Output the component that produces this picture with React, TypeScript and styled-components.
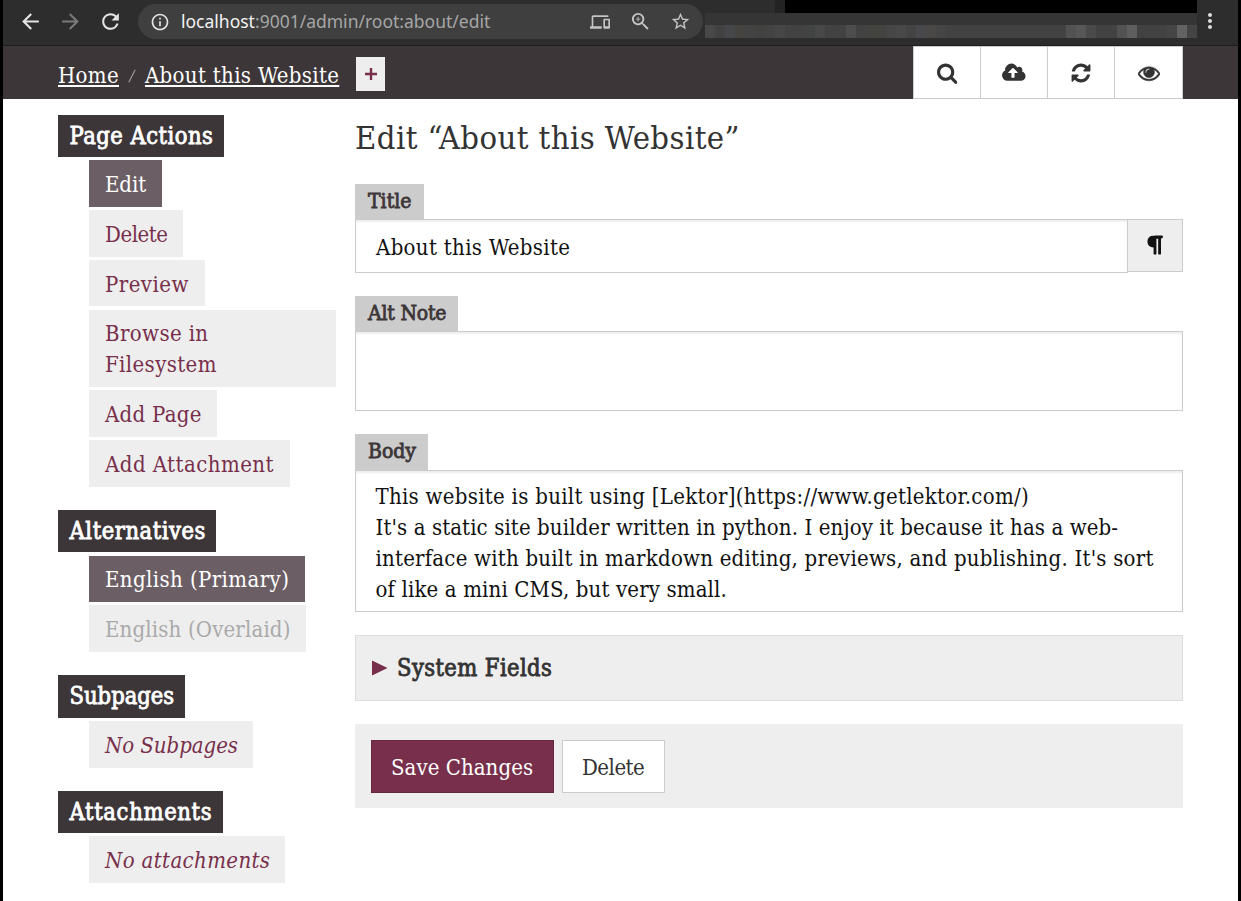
import React from "react";
import styled, { createGlobalStyle } from "styled-components";
import {
  MdArrowBack,
  MdArrowForward,
  MdRefresh,
  MdInfoOutline,
  MdDevices,
  MdZoomIn,
  MdStarOutline,
  MdMoreVert,
} from "react-icons/md";

const slab = `"DejaVu Serif Condensed", "DejaVu Serif", serif`;

const GlobalStyle = createGlobalStyle`
  *, *::before, *::after { box-sizing: border-box; }
  body {
    margin: 0;
    background: #000;
    color: #333;
    font-family: ${slab};
    font-size: 22px;
  }
`;

const Window = styled.div`
  width: 1241px;
  height: 901px;
  padding: 0 3px;
  background: #000;
  overflow: hidden;
`;

const Viewport = styled.div`
  height: 100%;
  background: #fff;
`;

/* ---------- browser toolbar ---------- */

const BrowserBar = styled.div`
  display: flex;
  align-items: flex-start;
  height: 46px;
  background: #2d2d2d;
  border-bottom: 1px solid #1d1d1d;
`;

const NavButtons = styled.div`
  display: flex;
  gap: 15px;
  width: 135px;
  padding: 9px 0 0 15px;
`;

const NavIcon = styled.span<{ $dim?: boolean }>`
  display: flex;
  font-size: 25px;
  color: ${(p) => (p.$dim ? "#7a7a7a" : "#e4e4e4")};
`;

const AddressBar = styled.div`
  display: flex;
  align-items: center;
  width: 565px;
  height: 35px;
  margin-top: 4px;
  padding: 0 12px;
  border-radius: 18px;
  background: #3f3f3f;
  color: #c4c4c4;
`;

const InfoIcon = styled(MdInfoOutline)`
  font-size: 20px;
  color: #e4e4e4;
`;

const Url = styled.span`
  flex: 1;
  margin-left: 11px;
  font: 17.5px/35px "Noto Sans", sans-serif;
  color: #a6a6a6;
`;

const Host = styled.span`
  color: #f2f2f2;
`;

const AddressIcons = styled.div`
  display: grid;
  grid-template-columns: repeat(3, 40px);
  justify-items: center;
  align-items: center;
  margin-right: -9px;
`;

const Redaction = styled.div`
  width: 492px;
  height: 38px;
  margin-left: 2px;
`;

const RedactionTop = styled.div`
  height: 13px;
  background: linear-gradient(90deg, transparent 70px, #232323 70px 80px, #000 80px);
`;

const RedactionMiddle = styled.div`
  height: 12px;
  background: #353535;
`;

const Mosaic = styled.div`
  display: flex;
  height: 13px;
`;

const MosaicCell = styled.span<{ $w: number; $c: string }>`
  flex: none;
  width: ${(p) => p.$w}px;
  background: ${(p) => p.$c};
`;

const MenuIcon = styled(MdMoreVert)`
  margin: 9px 0 0 1px;
  font-size: 24px;
  color: #dcdcdc;
`;

/* ---------- page header ---------- */

const Header = styled.header`
  display: flex;
  justify-content: space-between;
  height: 53px;
  padding: 0 55px;
  background: #3d3638;
`;

const Breadcrumbs = styled.nav`
  display: flex;
  align-items: center;
  padding-top: 6px;
`;

const Crumb = styled.a`
  color: #fff;
  letter-spacing: 0.33px;
  text-decoration: underline 2px;
  text-underline-offset: 2px;
  text-decoration-skip-ink: none;
`;

const Separator = styled.span`
  display: flex;
  width: 26px;
  justify-content: center;
  color: #999;
`;

const AddCrumb = styled.a`
  display: flex;
  align-items: center;
  justify-content: center;
  width: 29px;
  height: 34px;
  margin: 0 0 3px 17px;
  background: #eee;
`;

const HeaderButtons = styled.div`
  display: flex;
`;

const HeaderButton = styled.button`
  display: flex;
  align-items: center;
  justify-content: center;
  width: 68px;
  height: 53px;
  padding: 0;
  border: 1px solid #ccc;
  background: #fff;
  & + & {
    margin-left: -1px;
  }
  &:last-child {
    width: 69px;
  }
`;

/* ---------- layout ---------- */

const Content = styled.div`
  display: grid;
  grid-template-columns: 278px 828px;
  column-gap: 19px;
  padding: 0 55px;
`;

const Sidebar = styled.aside`
  display: flex;
  flex-direction: column;
  gap: 23.46px;
  padding-top: 15.58px;
`;

const Section = styled.section`
  display: flex;
  flex-direction: column;
  align-items: flex-start;
`;

const SectionTitle = styled.h4<{ $w: number; $track?: number }>`
  width: ${(p) => p.$w}px;
  height: 42.2px;
  margin: 0;
  padding-left: 11.5px;
  background: #3d3638;
  color: #fff;
  font-size: 23.5px;
  font-weight: 400;
  line-height: 43px;
  letter-spacing: ${(p) => p.$track ?? 0.48}px;
  white-space: nowrap;
  -webkit-text-stroke: 0.8px #fff;
`;

const ItemList = styled.ul`
  display: flex;
  flex-direction: column;
  align-items: flex-start;
  gap: 3.3px;
  margin: 3.3px 0 0 31px;
  padding: 0;
  list-style: none;
`;

type Tone = "link" | "active" | "muted" | "empty";

const Item = styled.li<{ $w: number; $track: number; $tone: Tone }>`
  width: ${(p) => p.$w}px;
  padding: 9.8px 0 6.2px 16px;
  background: ${(p) => (p.$tone === "active" ? "#6c5e65" : "#eee")};
  color: ${(p) => (p.$tone === "active" ? "#fff" : p.$tone === "muted" ? "#aaa" : "#782f4b")};
  font-style: ${(p) => (p.$tone === "empty" ? "italic" : "normal")};
  line-height: 30.6px;
  letter-spacing: ${(p) => p.$track}px;
  white-space: pre-line;
`;

/* ---------- form ---------- */

const Main = styled.main`
  display: flex;
  flex-direction: column;
`;

const PageTitle = styled.h2`
  height: 85px;
  margin: 0;
  padding-top: 19px;
  font-size: 32.5px;
  font-weight: 400;
  line-height: 40px;
  letter-spacing: 0.42px;
`;

const Field = styled.div`
  display: flex;
  flex-direction: column;
  align-items: flex-start;
  margin-bottom: 23px;
`;

const Label = styled.label<{ $w: number; $h?: number; $track?: number }>`
  width: ${(p) => p.$w}px;
  height: ${(p) => p.$h ?? 35}px;
  padding-left: 13px;
  background: #ccc;
  color: #3d3638;
  font-size: 21px;
  line-height: 35px;
  letter-spacing: ${(p) => p.$track ?? 0}px;
  -webkit-text-stroke: 0.8px #3d3638;
`;

const InputGroup = styled.div`
  display: flex;
  align-items: flex-start;
  width: 100%;
`;

const TextInput = styled.div`
  width: 773px;
  height: 54px;
  padding: 2px 20px 0;
  border: 1px solid #ccc;
  box-shadow: inset 0 2px 2px rgba(0, 0, 0, 0.07);
  color: #111;
  line-height: 52px;
  letter-spacing: 0.33px;
`;

const InputAddon = styled.div`
  display: flex;
  align-items: center;
  justify-content: center;
  width: 56px;
  height: 53px;
  margin-left: -1px;
  padding-bottom: 2px;
  border: 1px solid #ccc;
  background: #eee;
`;

const TextArea = styled.div<{ $h: number }>`
  width: 100%;
  height: ${(p) => p.$h}px;
  padding: 9.5px 19.5px 0;
  border: 1px solid #ccc;
  box-shadow: inset 0 2px 2px rgba(0, 0, 0, 0.07);
  color: #111;
`;

const TextLine = styled.div<{ $track: number }>`
  line-height: 31px;
  letter-spacing: ${(p) => p.$track}px;
  white-space: nowrap;
`;

const SystemFields = styled.div`
  display: flex;
  align-items: center;
  gap: 9px;
  height: 66px;
  margin-bottom: 23px;
  padding: 0 16px;
  border: 1px solid #ddd;
  background: #eee;
`;

const SystemTitle = styled.h4`
  margin: 0;
  font-size: 23.5px;
  font-weight: 400;
  letter-spacing: 0.4px;
  -webkit-text-stroke: 0.8px #333;
`;

const Actions = styled.div`
  display: flex;
  gap: 8px;
  height: 84px;
  padding: 16px;
  background: #eee;
`;

const Button = styled.button<{ $primary?: boolean; $w: number; $track: number }>`
  width: ${(p) => p.$w}px;
  height: 53px;
  padding: 1px 0 0 19px;
  border: 1px solid ${(p) => (p.$primary ? "#652840" : "#ccc")};
  background: ${(p) => (p.$primary ? "#782f4b" : "#fff")};
  color: ${(p) => (p.$primary ? "#fff" : "#333")};
  font: 22px ${slab};
  letter-spacing: ${(p) => p.$track}px;
  text-align: left;
`;

const icons = {
  search:
    "M1152 832q0-185-131.5-316.5t-316.5-131.5-316.5 131.5-131.5 316.5 131.5 316.5 316.5 131.5 316.5-131.5 131.5-316.5zm512 832q0 52-38 90t-90 38q-54 0-90-38l-343-342q-179 124-399 124-143 0-273.5-55.5t-225-150-150-225-55.5-273.5 55.5-273.5 150-225 225-150 273.5-55.5 273.5 55.5 225 150 150 225 55.5 273.5q0 220-124 399l343 343q37 37 37 90z",
  upload:
    "M1280 864q0-14-9-23l-352-352q-9-9-23-9t-23 9l-351 351q-10 12-10 24 0 14 9 23t23 9h224v352q0 13 9.5 22.5t22.5 9.5h192q13 0 22.5-9.5t9.5-22.5v-352h224q13 0 22.5-9.5t9.5-22.5zm640 288q0 159-112.5 271.5t-271.5 112.5h-1088q-185 0-316.5-131.5t-131.5-316.5q0-130 70-240t188-165q-2-30-2-43 0-212 150-362t362-150q156 0 285.5 87t188.5 231q71-62 166-62 106 0 181 75t75 181q0 76-41 138 130 31 213.5 135.5t83.5 238.5z",
  refresh:
    "M1639 1056q0 5-1 7-64 268-268 434.5t-478 166.5q-146 0-282.5-55t-243.5-157l-129 129q-19 19-45 19t-45-19-19-45v-448q0-26 19-45t45-19h448q26 0 45 19t19 45-19 45l-137 137q71 66 161 102t187 36q134 0 250-65t186-179q11-17 53-117 8-23 30-23h192q13 0 22.5 9.5t9.5 22.5zm25-800v448q0 26-19 45t-45 19h-448q-26 0-45-19t-19-45 19-45l138-138q-148-137-349-137-134 0-250 65t-186 179q-11 17-53 117-8 23-30 23h-199q-13 0-22.5-9.5t-9.5-22.5v-7q65-268 270-434.5t480-166.5q146 0 284 55.5t245 156.5l130-129q19-19 45-19t45 19 19 45z",
  eye: "M1664 960q-152-236-381-353 61 104 61 225 0 185-131.5 316.5t-316.5 131.5-316.5-131.5-131.5-316.5q0-121 61-225-229 117-381 353 133 205 333.5 326.5t434.5 121.5 434.5-121.5 333.5-326.5zm-720-384q0-20-14-34t-34-14q-125 0-214.5 89.5t-89.5 214.5q0 20 14 34t34 14 34-14 14-34q0-86 61-147t147-61q20 0 34-14t14-34zm848 384q0 34-20 69-140 230-376.5 368.5t-499.5 138.5-499.5-139-376.5-368q-20-35-20-69t20-69q140-229 376.5-368t499.5-139 499.5 139 376.5 368q20 35 20 69z",
  paragraph:
    "M1534 189v73q0 29-18.5 61t-42.5 32q-50 0-54 1-26 6-32 31-3 11-3 64v1152q0 25-18 43t-43 18h-108q-25 0-43-18t-18-43v-1218h-143v1218q0 25-17.5 43t-43.5 18h-108q-26 0-43.5-18t-17.5-43v-496q-147-12-245-59-126-58-192-179-64-117-64-259 0-166 88-286 88-118 209-159 111-37 417-37h479q25 0 43 18t18 43z",
};

type IconProps = { d: string; width?: number; color?: string; weight?: number };

function Icon({ d, width = 1792, color = "#333", weight = 0 }: IconProps) {
  return (
    <svg
      width={(22 * width) / 1792}
      height={22}
      viewBox={`0 0 ${width} 1792`}
      fill={color}
      stroke={color}
      strokeWidth={weight}
    >
      <path d={d} />
    </svg>
  );
}

const mosaic: [number, string][] = [
  [10, "#484848"], [10, "#424242"], [10, "#45474a"], [10, "#454440"], [10, "#434343"],
  [10, "#41423f"], [10, "#434343"], [10, "#464646"], [20, "#424242"], [10, "#424444"],
  [10, "#484848"], [21, "#424242"], [10, "#4d4d4d"], [10, "#424242"], [20, "#434340"],
  [10, "#464646"], [10, "#494949"], [10, "#444444"], [10, "#48494c"], [10, "#4a4846"],
  [10, "#454545"], [120, "#424242"], [10, "#525252"], [10, "#575757"], [10, "#4a4a4a"],
  [21, "#424242"], [10, "#525252"], [10, "#5e5e5e"], [30, "#424242"], [10, "#454545"],
  [10, "#626262"], [10, "#444444"],
];

type Entry = { text: string; w: number; track: number; tone?: Tone };

const sections: { title: string; w: number; track?: number; items: Entry[] }[] = [
  {
    title: "Page Actions",
    w: 166,
    items: [
      { text: "Edit", w: 73, track: -0.1, tone: "active" },
      { text: "Delete", w: 94, track: -0.45 },
      { text: "Preview", w: 116, track: 0.45 },
      { text: "Browse in\nFilesystem", w: 247, track: 0.38 },
      { text: "Add Page", w: 128, track: 0.3 },
      { text: "Add Attachment", w: 201, track: 0.46 },
    ],
  },
  {
    title: "Alternatives",
    w: 158,
    track: 0.55,
    items: [
      { text: "English (Primary)", w: 216, track: 0.4, tone: "active" },
      { text: "English (Overlaid)", w: 217, track: 0.15, tone: "muted" },
    ],
  },
  {
    title: "Subpages",
    w: 127,
    track: 0,
    items: [{ text: "No Subpages", w: 164, track: -0.05, tone: "empty" }],
  },
  {
    title: "Attachments",
    w: 165,
    track: 0.67,
    items: [{ text: "No attachments", w: 196, track: 0.37, tone: "empty" }],
  },
];

export default function App() {
  return (
    <Window>
      <GlobalStyle />
      <Viewport>
        <BrowserBar>
          <NavButtons>
            <NavIcon><MdArrowBack /></NavIcon>
            <NavIcon $dim><MdArrowForward /></NavIcon>
            <NavIcon><MdRefresh /></NavIcon>
          </NavButtons>
          <AddressBar>
            <InfoIcon />
            <Url><Host>localhost</Host>:9001/admin/root:about/edit</Url>
            <AddressIcons>
              <MdDevices size={20} />
              <MdZoomIn size={23} />
              <MdStarOutline size={21} />
            </AddressIcons>
          </AddressBar>
          <Redaction>
            <RedactionTop />
            <RedactionMiddle />
            <Mosaic>
              {mosaic.map(([w, c], i) => (
                <MosaicCell key={i} $w={w} $c={c} />
              ))}
            </Mosaic>
          </Redaction>
          <MenuIcon />
        </BrowserBar>

        <Header>
          <Breadcrumbs>
            <Crumb>Home</Crumb>
            <Separator>
              <svg width="8" height="14" viewBox="0 0 8 14" stroke="currentColor" strokeWidth="1.2">
                <path d="M0.8 13.2 7.2 0.8" />
              </svg>
            </Separator>
            <Crumb>About this Website</Crumb>
            <AddCrumb>
              <svg width="12" height="12" viewBox="0 0 12 12" stroke="#782f4b" strokeWidth="2.4">
                <path d="M6 0v12M0 6h12" />
              </svg>
            </AddCrumb>
          </Breadcrumbs>
          <HeaderButtons>
            <HeaderButton><Icon d={icons.search} width={1664} /></HeaderButton>
            <HeaderButton><Icon d={icons.upload} width={1920} /></HeaderButton>
            <HeaderButton><Icon d={icons.refresh} /></HeaderButton>
            <HeaderButton><Icon d={icons.eye} weight={40} /></HeaderButton>
          </HeaderButtons>
        </Header>

        <Content>
          <Sidebar>
            {sections.map((s) => (
              <Section key={s.title}>
                <SectionTitle $w={s.w} $track={s.track}>{s.title}</SectionTitle>
                <ItemList>
                  {s.items.map((it) => (
                    <Item key={it.text} $w={it.w} $track={it.track} $tone={it.tone ?? "link"}>
                      {it.text}
                    </Item>
                  ))}
                </ItemList>
              </Section>
            ))}
          </Sidebar>

          <Main>
            <PageTitle>Edit “About this Website”</PageTitle>
            <Field>
              <Label $w={69}>Title</Label>
              <InputGroup>
                <TextInput>About this Website</TextInput>
                <InputAddon><Icon d={icons.paragraph} color="#111" /></InputAddon>
              </InputGroup>
            </Field>
            <Field>
              <Label $w={103} $track={-0.2}>Alt Note</Label>
              <TextArea $h={80} />
            </Field>
            <Field>
              <Label $w={73} $h={36}>Body</Label>
              <TextArea $h={142}>
                <TextLine $track={0.28}>This website is built using [Lektor](https://www.getlektor.com/)</TextLine>
                <TextLine $track={0.1}>It's a static site builder written in python. I enjoy it because it has a web-</TextLine>
                <TextLine $track={0.22}>interface with built in markdown editing, previews, and publishing. It's sort</TextLine>
                <TextLine $track={0.14}>of like a mini CMS, but very small.</TextLine>
              </TextArea>
            </Field>
            <SystemFields>
              <svg width="16" height="16" viewBox="0 0 16 16" fill="#782f4b">
                <path d="M0 0.5 15.5 8 0 15.5z" />
              </svg>
              <SystemTitle>System Fields</SystemTitle>
            </SystemFields>
            <Actions>
              <Button $primary $w={183} $track={0.05}>Save Changes</Button>
              <Button $w={103} $track={-0.5}>Delete</Button>
            </Actions>
          </Main>
        </Content>
      </Viewport>
    </Window>
  );
}
